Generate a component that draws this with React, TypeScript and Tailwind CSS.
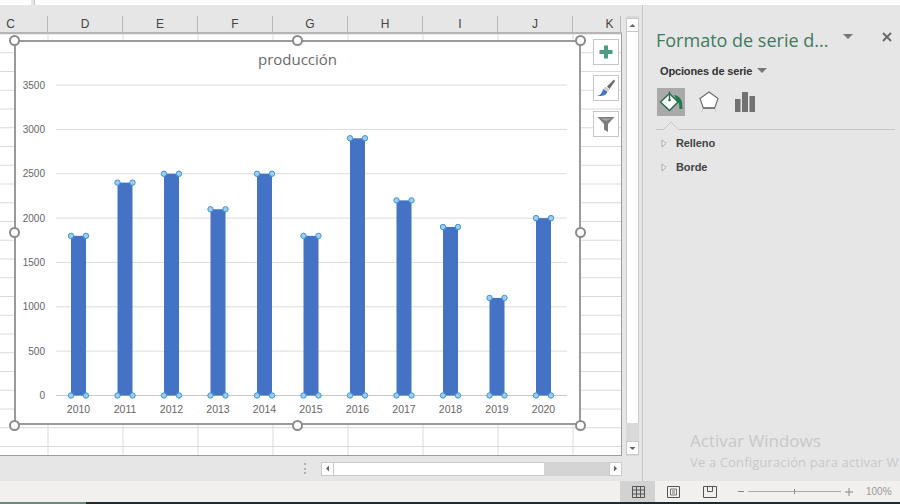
const years = [2010, 2011, 2012, 2013, 2014, 2015, 2016, 2017, 2018, 2019, 2020];
const values = [1800, 2400, 2500, 2100, 2500, 1800, 2900, 2200, 1900, 1100, 2000];
const ticks = [0, 500, 1000, 1500, 2000, 2500, 3000, 3500];
const columns = [
  { name: "C", width: 48, className: "pr-[26px]" },
  { name: "D", width: 75, className: "" },
  { name: "E", width: 75, className: "" },
  { name: "F", width: 75, className: "" },
  { name: "G", width: 75, className: "" },
  { name: "H", width: 75, className: "" },
  { name: "I", width: 75, className: "" },
  { name: "J", width: 75, className: "" },
  { name: "K", width: 48, className: "pl-[26px]" },
];

const baseY = 353.5;
const yFor = (v: number) => baseY - (v / 500) * 44.35;

function ChartPlot() {
  return (
    <svg width="563" height="381" viewBox="0 0 563 381" className="block">
      <text x="281.5" y="23" textAnchor="middle" fontSize="15" fill="#6b6b6b" fontFamily="'Open Sans', sans-serif">
        producción
      </text>
      {ticks.map((t) => (
        <g key={t}>
          <line x1="40" x2="551" y1={yFor(t)} y2={yFor(t)} stroke={t === 0 ? "#c8c8c8" : "#dcdcdc"} strokeWidth="1" />
          <text x="29" y={yFor(t) + 3.5} textAnchor="end" fontSize="10" fill="#666" fontFamily="'Liberation Sans', sans-serif">
            {t}
          </text>
        </g>
      ))}
      {years.map((year, i) => {
        const cx = 62.5 + i * 46.5;
        const top = yFor(values[i]);
        const corners = [
          [cx - 7.5, top],
          [cx + 7.5, top],
          [cx - 7.5, baseY],
          [cx + 7.5, baseY],
        ];
        return (
          <g key={year}>
            <rect x={cx - 7.5} y={top} width="15" height={baseY - top} fill="#4472c4" />
            {corners.map(([x, y], c) => (
              <circle key={c} cx={x} cy={y} r="2.7" fill="#9fcdf0" stroke="#3d94d6" strokeWidth="1" />
            ))}
            <text x={cx} y="371" textAnchor="middle" fontSize="10.5" fill="#666" fontFamily="'Liberation Sans', sans-serif">
              {year}
            </text>
          </g>
        );
      })}
    </svg>
  );
}

function Handle({ className }: { className: string }) {
  return <div className={`absolute h-[11px] w-[11px] rounded-full border-2 border-[#8c8c8c] bg-white ${className}`} />;
}

function SideButton({ children }: { children: React.ReactNode }) {
  return (
    <div className="flex h-[26px] w-[26px] items-center justify-center border border-[#c6c6c6] bg-white">
      {children}
    </div>
  );
}

function ScrollButton({ children }: { children: React.ReactNode }) {
  return (
    <div className="flex h-[14px] w-[13px] shrink-0 items-center justify-center border border-[#c9c9c9] bg-white text-[#555]">
      {children}
    </div>
  );
}

function Tri({ d }: { d: string }) {
  return (
    <svg width="7" height="7" viewBox="0 0 7 7">
      <path d={d} fill="#666" />
    </svg>
  );
}

function PanelRow({ label }: { label: string }) {
  return (
    <div className="flex h-6 items-center">
      <svg width="6" height="9" viewBox="0 0 6 9" className="ml-[18px]">
        <path d="M1 1l4 3.5L1 8z" fill="#f2f2f2" stroke="#9a9a9a" strokeWidth="0.8" />
      </svg>
      <span className="ml-[9px] text-[11px] font-bold tracking-[-0.1px] text-[#444]">{label}</span>
    </div>
  );
}

export default function App() {
  return (
    <div className="flex h-[504px] w-[900px] flex-col overflow-hidden bg-[#e6e6e6] font-['Liberation_Sans',sans-serif]">
      {/* barra de formulas, casi toda fuera del recorte */}
      <div className="flex h-[5px] shrink-0 gap-[3px] bg-[#e6e6e6]">
        <div className="h-full w-[31px] bg-white" />
        <div className="h-full flex-1 border-l border-[#c6c6c6] bg-white" />
      </div>

      <div className="flex min-h-0 flex-1">
        <div className="flex w-[642px] shrink-0 flex-col">
          <div className="flex min-h-0 flex-1 pt-[11px]">
            <div className="flex w-[622px] shrink-0 flex-col">
              <div className="flex h-[18px] shrink-0 border-b-2 border-[#b5b5b5] bg-[#e6e6e6]">
                {columns.map((c) => (
                  <div
                    key={c.name}
                    style={{ width: c.width }}
                    className={`flex items-center justify-center border-r border-[#b9b9b9] text-[12px] text-[#444] ${c.className}`}
                  >
                    {c.name}
                  </div>
                ))}
              </div>

              <div className="relative min-h-0 flex-1 border-r border-b border-[#9c9c9c] bg-white bg-[linear-gradient(#dadada_1px,transparent_1px),linear-gradient(90deg,#dadada_1px,transparent_1px)] bg-[size:75px_18.75px] bg-[position:47.5px_-0.5px]">
                {/* grafico */}
                <div className="absolute top-[6px] left-[14px] h-[385px] w-[567px] border-2 border-[#9a9a9a] bg-white">
                  <ChartPlot />
                </div>
                <Handle className="top-[1px] left-[9px]" />
                <Handle className="top-[1px] left-[292px]" />
                <Handle className="top-[1px] left-[575px]" />
                <Handle className="top-[193px] left-[9px]" />
                <Handle className="top-[193px] left-[575px]" />
                <Handle className="top-[386px] left-[9px]" />
                <Handle className="top-[386px] left-[292px]" />
                <Handle className="top-[386px] left-[575px]" />

                <div className="absolute top-[5px] left-[593px] flex flex-col gap-[10px]">
                  <SideButton>
                    <svg width="16" height="16" viewBox="0 0 16 16">
                      <path d="M6 1.5h4V6h4.5v4H10v4.5H6V10H1.5V6H6z" fill="#4f9d80" />
                    </svg>
                  </SideButton>
                  <SideButton>
                    <svg width="22" height="22" viewBox="0 0 22 22">
                      <path d="M12 9.5L19 2.5l1 1.5-5.5 8z" fill="#6a6a6a" />
                      <path d="M10.5 9.5l4 3-1.5 2-4.5-3z" fill="#c3cfdc" />
                      <path d="M1.5 19c3-.5 4.5-1.5 5.5-4 .4-1.2 1-2.3 1.5-3l4 2.7c-1 2.8-4 4.8-11 4.3z" fill="#3f78c0" />
                    </svg>
                  </SideButton>
                  <SideButton>
                    <svg width="20" height="20" viewBox="0 0 20 20">
                      <path d="M1.5 3h17l-6.5 7v8l-4-2.5V10z" fill="#7d7d7d" />
                      <path d="M4 4.5h12l-6 2.5z" fill="#a5a5a5" />
                    </svg>
                  </SideButton>
                </div>
              </div>
            </div>

            <div className="ml-[4px] flex w-[13px] shrink-0 flex-col bg-[#d9d9d9] pt-[2px] pb-[1px]">
              <ScrollButton><Tri d="M3.5 2L6.5 5H.5z" /></ScrollButton>
              <div className="h-[391px] shrink-0 border-x border-[#c9c9c9] bg-white" />
              <div className="flex-1" />
              <ScrollButton><Tri d="M.5 2h6l-3 3z" /></ScrollButton>
            </div>
          </div>

          {/* barra horizontal */}
          <div className="flex h-[25px] shrink-0 items-center">
            <div className="ml-[304px] flex h-[11px] w-[2px] flex-col justify-between">
              <div className="h-[2px] bg-[#b0b0b0]" />
              <div className="h-[2px] bg-[#b0b0b0]" />
              <div className="h-[2px] bg-[#b0b0b0]" />
            </div>
            <div className="ml-[15px] flex h-[14px] w-[301px] bg-[#d4d4d4]">
              <ScrollButton><Tri d="M2 3.5L5 .5v6z" /></ScrollButton>
              <div className="h-full w-[210px] border-y border-[#c9c9c9] bg-white" />
              <div className="flex-1" />
              <ScrollButton><Tri d="M2 .5l3 3-3 3z" /></ScrollButton>
            </div>
          </div>
        </div>

        {/* panel de formato */}
        <div className="relative min-w-0 flex-1 border-l border-[#c8c8c8] bg-[#e6e6e6]">
          <div className="mt-[22px] flex h-[26px] items-center pl-[13px]">
            <span className="w-[176px] shrink-0 whitespace-nowrap font-['Open_Sans',sans-serif] text-[18px] leading-[26px] text-[#3f7a5c]">Formato de serie d...</span>
            <svg width="10" height="6" viewBox="0 0 10 6" className="mb-[6px] ml-[11px]">
              <path d="M0 0h10L5 5z" fill="#777" />
            </svg>
            <svg width="10" height="10" viewBox="0 0 10 10" className="mb-[6px] ml-[29px]">
              <path d="M1 1l8 8M9 1L1 9" stroke="#666" strokeWidth="1.8" />
            </svg>
          </div>

          <div className="mt-[8px] flex h-[20px] items-center pl-[17px]">
            <span className="text-[11px] font-bold tracking-[-0.15px] text-[#333]">Opciones de serie</span>
            <svg width="10" height="6" viewBox="0 0 10 6" className="ml-[5px]">
              <path d="M0 0h10L5 5z" fill="#777" />
            </svg>
          </div>

          <div className="mt-[7px] ml-[14px] flex items-center">
            <div className="flex h-[28px] w-[28px] items-center justify-center bg-[#a9a9a9]">
              <svg width="28" height="28" viewBox="0 0 28 28">
                <path d="M17 7c4 .5 7.500 3.500 8 7.500l.5 6.500h-3l-.5-5.500-2-3z" fill="#1f7a4d" />
                <path d="M12.500 5.500L3.500 14l9 8.500 8.500-8.500z" fill="#fff" stroke="#2f6b50" strokeWidth="1.500" />
                <path d="M12.500 3.500v8" stroke="#2f6b50" strokeWidth="1.400" />
                <circle cx="12.500" cy="12" r="1.300" fill="#2f6b50" />
              </svg>
            </div>
            <div className="ml-[10px] flex h-[28px] w-[28px] items-center justify-center">
              <svg width="22" height="24" viewBox="0 0 22 24">
                <path d="M11 2l9 6.500-3.300 9.500H5.300L2 8.500z" fill="#fff" stroke="#707070" strokeWidth="1.200" />
                <path d="M5 18l-1 4M17 18l1 4" stroke="#d0d0d0" strokeWidth="1.200" />
                <path d="M5 18h12" stroke="#707070" strokeWidth="1.600" />
              </svg>
            </div>
            <div className="ml-[8px] flex h-[28px] w-[28px] items-center justify-center">
              <svg width="20" height="20" viewBox="0 0 20 20">
                <path d="M0 7h5.500v13H0zM7 0h6v20H7zM14.500 4H20v16h-5.500z" fill="#727272" />
              </svg>
            </div>
          </div>

          <div className="relative mt-[13px] mr-[5px] ml-[13px] border-t border-[#c6c6c6]">
            <svg width="16" height="8" viewBox="0 0 16 8" className="absolute -top-[8px] left-[7px]">
              <path d="M0 8l8-8 8 8" fill="#e6e6e6" stroke="#c6c6c6" />
            </svg>
          </div>

          <div className="mt-[1px]">
            <PanelRow label="Relleno" />
            <PanelRow label="Borde" />
          </div>

          {/* marca de agua */}
          <div className="absolute top-[425px] left-[47px] whitespace-nowrap font-['Open_Sans',sans-serif] text-[#c8c8c8]">
            <div className="text-[17px] leading-[22px]">Activar Windows</div>
            <div className="text-[13px] leading-[20px] tracking-[0.15px]">Ve a Configuración para activar W</div>
          </div>
        </div>
      </div>

      {/* barra de estado */}
      <div className="flex h-[21px] shrink-0 items-center bg-[#f1f0ee]">
        <div className="ml-[620px] flex h-full w-[35px] items-center justify-center bg-[#d2d2d2]">
          <svg width="13" height="12" viewBox="0 0 13 12" className="ml-[2px]">
            <path d="M.5.5h12v11H.5zM.5 4h12M.5 8h12M4.500.5v11M8.500.5v11" fill="none" stroke="#555" />
          </svg>
        </div>
        <svg width="13" height="12" viewBox="0 0 13 12" className="ml-[12px]">
          <path d="M.5.5h12v11H.5z" fill="none" stroke="#555" />
          <path d="M3.500 3h6v6h-6zM5 5h3M5 7h3" fill="none" stroke="#777" />
        </svg>
        <svg width="14" height="12" viewBox="0 0 14 12" className="ml-[23px]">
          <path d="M.5.5h13v11H.5zM4.500.5v5h5v-5" fill="none" stroke="#555" />
        </svg>
        <span className="ml-[21px] h-[1px] w-[6px] bg-[#888]" />
        <div className="relative ml-[4px] h-[1px] w-[93px] bg-[#aaa]">
          <div className="absolute -top-[2px] left-[46px] h-[5px] w-[1px] bg-[#888]" />
        </div>
        <svg width="8" height="8" viewBox="0 0 8 8" className="ml-[4px]">
          <path d="M4 0v8M0 4h8" stroke="#888" />
        </svg>
        <span className="ml-[13px] text-[10px] text-[#999]">100%</span>
      </div>
      <div className="flex h-[2px] shrink-0 bg-[#1f2a2a]">
        <div className="h-full w-[86px] bg-[#6c8a7c]" />
      </div>
    </div>
  );
}
